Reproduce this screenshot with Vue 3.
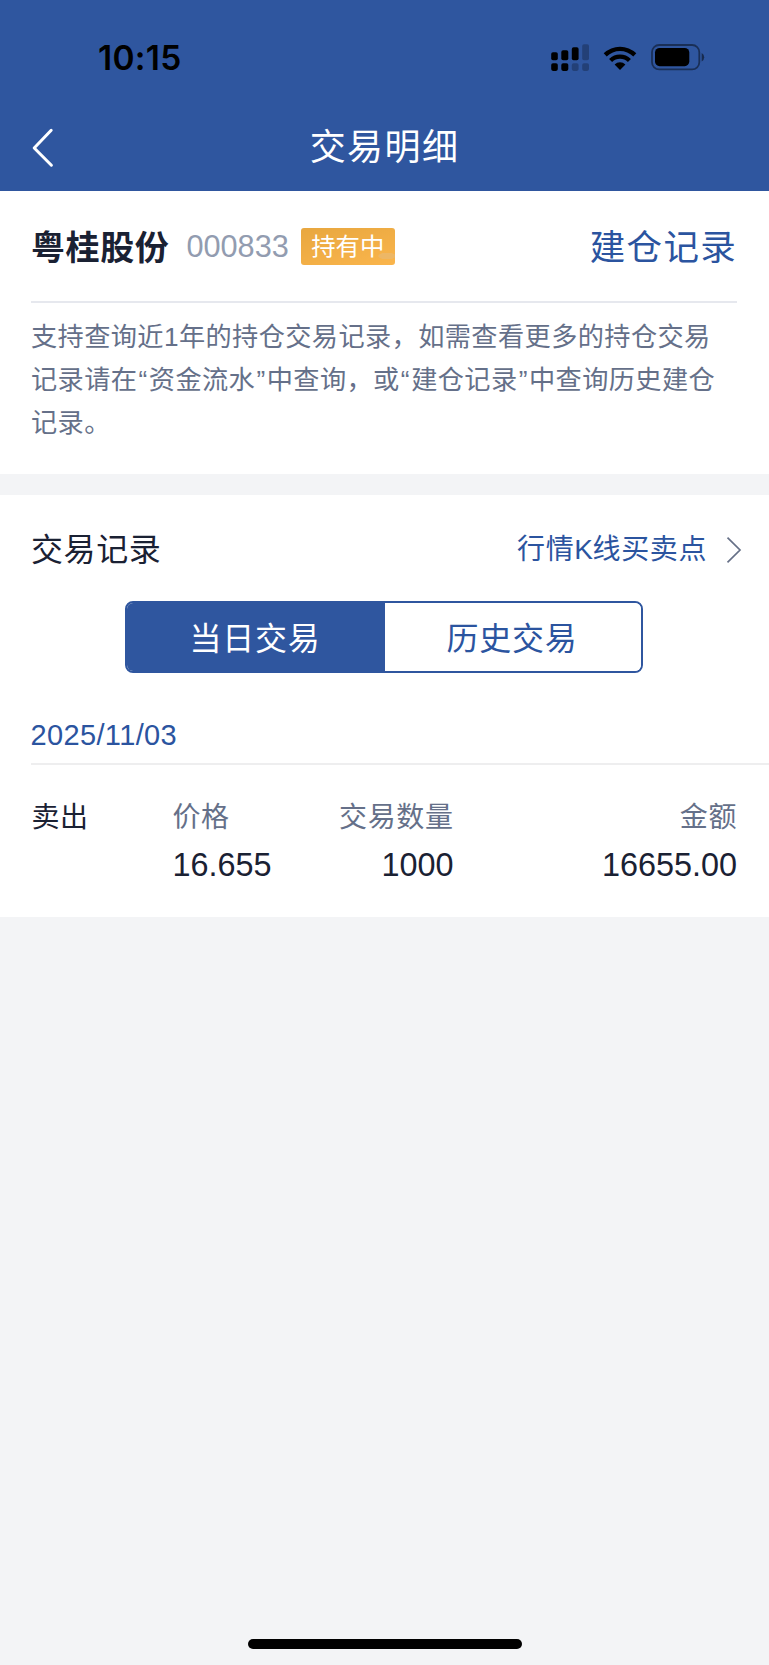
<script setup>
const notice = [
  '支持查询近1年的持仓交易记录，如需查看更多的持仓交易',
  '记录请在“资金流水”中查询，或“建仓记录”中查询历史建仓',
  '记录。',
].map((line) => line.split(/([“”])/))
const isQuote = (part) => part === '“' || part === '”'
const trade = { side: '卖出', price: '16.655', quantity: '1000', amount: '16655.00' }
</script>

<template>
  <div class="page">
    <header class="header">
      <div class="status">
        <span class="time">10:15</span>
        <div class="indicators">
          <svg class="signal" width="39" height="28" viewBox="0 0 39 28">
            <rect x="0.2" y="8.3" width="6.6" height="8" rx="1.8" />
            <rect x="10.3" y="6.3" width="7" height="10" rx="1.8" />
            <rect x="20.8" y="3.2" width="6.8" height="13.1" rx="1.8" />
            <rect class="dim" x="31.2" y="0.2" width="6.8" height="16.1" rx="1.8" />
            <rect x="0.2" y="19.3" width="6.6" height="7.6" rx="1.8" />
            <rect x="10.3" y="19.3" width="7" height="7.6" rx="1.8" />
            <rect class="dim" x="20.8" y="19.3" width="6.8" height="7.6" rx="1.8" />
            <rect class="dim" x="31.2" y="19.3" width="6.8" height="7.6" rx="1.8" />
          </svg>
          <svg class="wifi" width="34" height="26" viewBox="0 0 34 26">
            <path d="M0.7 8.3 A23.5 23.5 0 0 1 33.3 8.3 L30.3 11.4 A19.2 19.2 0 0 0 3.7 11.4 Z" />
            <path d="M6.1 13.9 A15.8 15.8 0 0 1 27.9 13.9 L24.9 17 A11.4 11.4 0 0 0 9.1 17 Z" />
            <path d="M11.6 19.5 A7.8 7.8 0 0 1 22.4 19.5 L17 25.1 Z" />
          </svg>
          <svg class="battery" width="54" height="27" viewBox="0 0 54 27">
            <rect class="shell" x="1" y="1" width="47.3" height="24.4" rx="7.2" />
            <rect x="4" y="4" width="34.3" height="18.2" rx="4.6" />
            <path class="cap" d="M50.7 9 Q53.2 10.2 53.2 13.2 Q53.2 16.2 50.7 17.4 Z" />
          </svg>
        </div>
      </div>
      <nav class="nav">
        <svg class="back" width="24" height="40" viewBox="0 0 24 40">
          <path d="M20.2 2.3 L3.2 20 L20.4 37.2" />
        </svg>
        <h1 class="title">交易明细</h1>
      </nav>
    </header>

    <section class="card">
      <div class="stock">
        <strong class="name">粤桂股份</strong>
        <span class="code">000833</span>
        <span class="badge"><span class="badge-text">持有中</span></span>
        <a class="open-record">建仓记录</a>
      </div>
      <p class="notice">
        <span v-for="(parts, i) in notice" :key="i" class="line"><span v-for="(part, j) in parts" :key="j" :class="{ quote: isQuote(part) }">{{ part }}</span></span>
      </p>
    </section>

    <section class="card records">
      <div class="records-head">
        <h2 class="records-title">交易记录</h2>
        <a class="kline">行情<span class="latin">K</span>线买卖点</a>
        <svg class="more" width="16" height="28" viewBox="0 0 16 28">
          <path d="M1.5 1.7 L14 14 L1.5 26.3" />
        </svg>
      </div>
      <div class="tabs">
        <button class="tab active">当日交易</button>
        <button class="tab">历史交易</button>
      </div>
      <div class="date">2025/11/03</div>
      <div class="trade">
        <span class="side">{{ trade.side }}</span>
        <div class="col">
          <span class="label">价格</span>
          <span class="value">{{ trade.price }}</span>
        </div>
        <div class="col right">
          <span class="label">交易数量</span>
          <span class="value">{{ trade.quantity }}</span>
        </div>
        <div class="col right">
          <span class="label">金额</span>
          <span class="value">{{ trade.amount }}</span>
        </div>
      </div>
    </section>

    <footer class="footer"><div class="home-bar"></div></footer>
  </div>
</template>

<style>
body {
  background: #f3f4f6;
}
</style>

<style scoped>
.page {
  display: flex;
  flex-direction: column;
  width: 769px;
  height: 1665px;
  overflow: hidden;
  background: #f3f4f6;
  color: #1a2133;
  font-family: "Liberation Sans", "Noto Sans CJK SC", sans-serif;
  white-space: nowrap;
}
.page * {
  box-sizing: border-box;
}
.header {
  flex: none;
  height: 191px;
  background: #2f569f;
}
.status {
  display: flex;
  align-items: center;
  justify-content: space-between;
  height: 103px;
  padding: 12px 64px 0 98px;
}
.time {
  color: #000;
  font: 600 33.5px/40px Inter, sans-serif;
  letter-spacing: 0.3px;
}
.indicators {
  display: flex;
  align-items: center;
}
.wifi {
  margin-left: 13px;
}
.battery {
  margin-left: 14px;
}
.dim {
  opacity: 0.25;
}
.shell {
  fill: none;
  stroke: #000;
  stroke-width: 1.8;
  opacity: 0.45;
}
.cap {
  opacity: 0.5;
}
.nav {
  display: grid;
  grid-template-columns: 100px 1fr 100px;
  align-items: center;
  height: 88px;
}
.back {
  margin: 2px 0 0 31px;
}
.back path {
  fill: none;
  stroke: #fff;
  stroke-width: 3;
  stroke-linecap: round;
  stroke-linejoin: round;
}
.title {
  margin: 2px 0 0;
  color: #fff;
  font-size: 36px;
  font-weight: 400;
  line-height: 44px;
  letter-spacing: 1.4px;
  text-align: center;
}
.card {
  flex: none;
  height: 283px;
  padding: 0 32px 0 31px;
  background: #fff;
}
.stock {
  display: flex;
  align-items: center;
  height: 112px;
  border-bottom: 2px solid #e6e8ee;
}
.name {
  margin: 3px 0 0;
  font-size: 34px;
  line-height: 40px;
  letter-spacing: 0.6px;
}
.code {
  margin: 1px 0 0 17px;
  color: #929cb0;
  font-size: 30.7px;
  line-height: 40px;
}
.badge {
  display: flex;
  align-items: center;
  height: 37px;
  margin-left: 12px;
  width: 94px;
  justify-content: center;
  border-radius: 3px;
  background:
    radial-gradient(ellipse 9px 3.5px at 86px 28px, #edb766 90%, transparent),
    linear-gradient(165deg, #e8a73f, #fab54c);
  color: #fff;
}
.badge-text {
  font-size: 24.4px;
  line-height: 37px;
}
.open-record {
  margin: 3px 0 0 auto;
  color: #2b549f;
  font-size: 35.5px;
  line-height: 44px;
  letter-spacing: 1.3px;
}
.notice {
  margin: 13px 0 0;
  color: #657089;
  font-size: 26.2px;
  line-height: 43.2px;
  letter-spacing: 0.4px;
}
.line {
  display: block;
}
.quote {
  margin: 0 1.2px;
}
.records {
  height: 422px;
  margin-top: 21px;
  padding: 0;
}
.records-head {
  display: flex;
  align-items: center;
  height: 106px;
  padding: 4px 27px 0 31px;
}
.records-title {
  margin: 0;
  font-size: 32px;
  font-weight: 400;
  line-height: 40px;
  letter-spacing: 0.6px;
}
.kline {
  margin-left: auto;
  color: #2b549f;
  font-size: 28px;
  line-height: 40px;
  letter-spacing: 0.6px;
}
.latin {
  letter-spacing: -0.4px;
}
.more {
  margin: -1px 0 0 19px;
}
.more path {
  fill: none;
  stroke: #667087;
  stroke-width: 1.7;
}
.tabs {
  display: flex;
  width: 518px;
  height: 72px;
  margin-left: 125px;
  overflow: hidden;
  border: 2px solid #2f569f;
  border-radius: 8px;
}
.tab {
  flex: 1 1 0;
  padding: 3px 2px 0 0;
  border: 0;
  background: #fff;
  color: #2b549f;
  font: inherit;
  font-size: 32px;
  line-height: 40px;
  letter-spacing: 0.7px;
}
.tab.active {
  flex: 0 0 258px;
  background: #2f569f;
  color: #fff;
}
.date {
  height: 92px;
  margin-left: 30.5px;
  padding-top: 41.5px;
  border-bottom: 2px solid #eeeeef;
  color: #2b549f;
  font-size: 29px;
  line-height: 40px;
  letter-spacing: 0.35px;
}
.trade {
  display: grid;
  grid-template-columns: 141px 120px 161px 1fr;
  padding: 28px 32px 0 31.5px;
}
.side,
.label {
  font-size: 28px;
  line-height: 49px;
  letter-spacing: 0.6px;
}
.col {
  display: flex;
  flex-direction: column;
}
.right {
  align-items: flex-end;
}
.label {
  color: #657089;
}
.value {
  font-size: 32.4px;
  line-height: 46px;
}
.footer {
  display: flex;
  justify-content: center;
  align-items: flex-end;
  flex: 1;
  padding-bottom: 16px;
}
.home-bar {
  width: 274px;
  height: 10px;
  border-radius: 5px;
  background: #000;
}
</style>
